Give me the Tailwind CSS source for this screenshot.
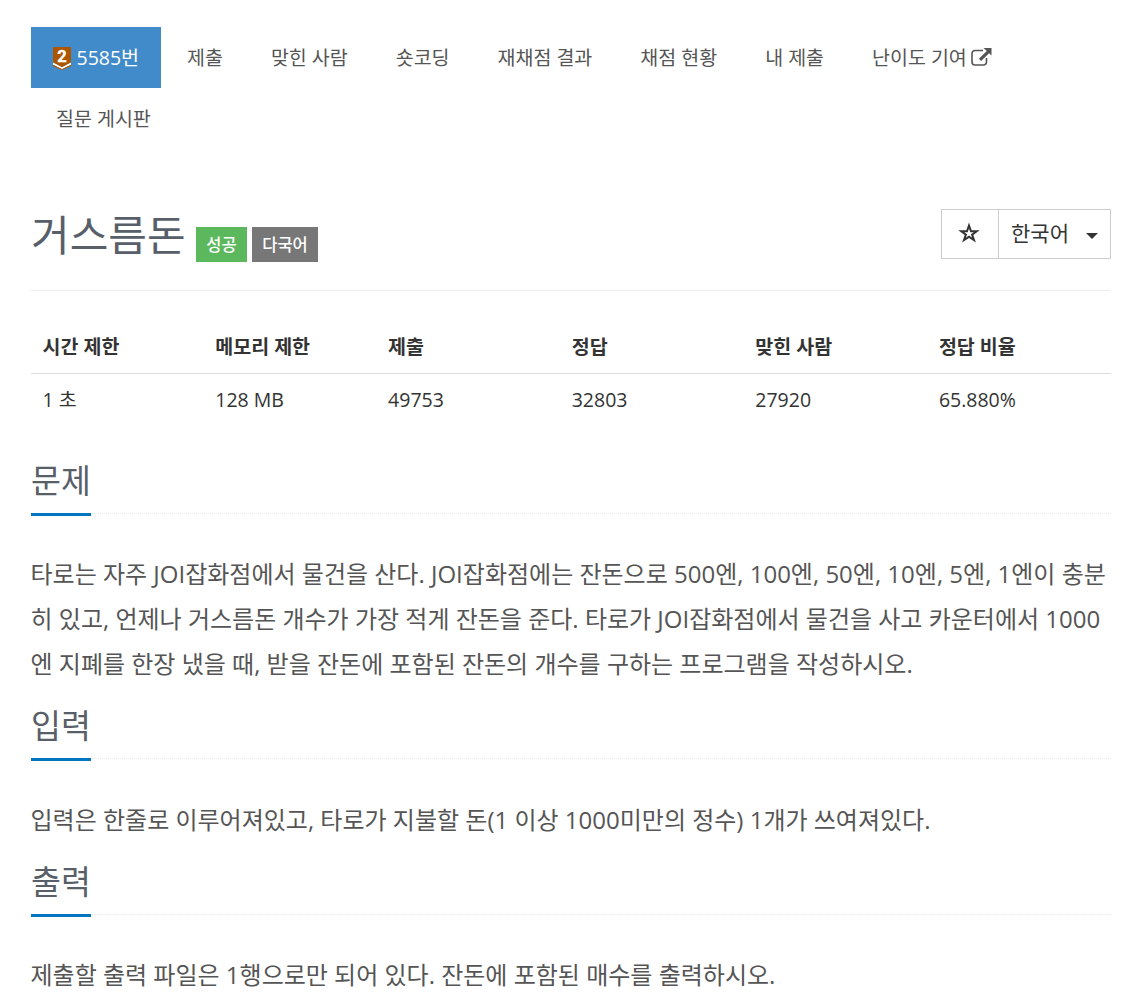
<!DOCTYPE html>
<html lang="ko">
<head>
    <meta charset="UTF-8">
    <meta name="viewport" content="width=device-width, initial-scale=1.0">
    <title>5585번: 거스름돈</title>
    <script src="https://cdn.jsdelivr.net/npm/@tailwindcss/browser@4"></script>
</head>
<body class="bg-white text-[#333] text-[19.5px] leading-[30px] font-['Open_Sans','Noto_Sans_CJK_KR',sans-serif]">

    <div class="w-[1080px] ml-[31px] pt-[27px]">
        <!-- Problem menu -->
        <nav class="flex flex-wrap gap-x-[3px] text-[#555]">
            <a href="#" class="flex items-center w-[130px] h-[61px] mr-[0.5px] pl-[22px] bg-[#428bca] text-white">
                <svg class="w-[18px] h-[23px] mt-[2px] mr-[5.5px]" viewBox="0 0 18 23">
                    <path d="M0 0h18v15.500l-9 4.700-9-4.700z" fill="#ad5600"/>
                    <path d="M0 15.500l9 4.700 9-4.700v2.200l-9 4.700-9-4.700z" fill="#fff"/>
                    <path d="M0 17.700l9 4.300 9-4.300v1.500l-9 3.800-9-3.800z" fill="#ad5600"/>
                    <text x="9" y="14.500" text-anchor="middle" fill="#fff" stroke="#fff" stroke-width="0.400" font-size="16.500" font-weight="700" font-family="Roboto, sans-serif">2</text>
                </svg>
                <span>5585번</span>
            </a>
            <a href="#" class="h-[61px] px-[22.5px] leading-[61px]">제출</a>
            <a href="#" class="h-[61px] px-[22.5px] leading-[61px]">맞힌 사람</a>
            <a href="#" class="h-[61px] px-[22.5px] leading-[61px]">숏코딩</a>
            <a href="#" class="h-[61px] px-[22.5px] leading-[61px]">재채점 결과</a>
            <a href="#" class="h-[61px] px-[22.5px] leading-[61px]">채점 현황</a>
            <a href="#" class="h-[61px] px-[22.5px] leading-[61px]">내 제출</a>
            <a href="#" class="flex items-center h-[61px] px-[22.5px]">
                <span>난이도 기여</span>
                <svg class="w-[21px] h-[19px] ml-[4.5px] -mt-px" viewBox="0 0 21 19">
                    <path d="M12 2.500H4A3 3 0 0 0 1 5.500v8.500A3 3 0 0 0 4 17h8.500a3 3 0 0 0 3-3v-4" fill="none" stroke="currentColor" stroke-width="1.600"/>
                    <path d="M12.500 0H20.500v7.500l-2.400-2.300-8 7.700-2.200-2.200 7.900-7.600z" fill="currentColor"/>
                </svg>
            </a>
            <a href="#" class="h-[61px] px-[25px] leading-[61px]">질문 게시판</a>
        </nav>

        <!-- Title -->
        <header class="flex items-start h-[142px] pt-[60px] border-b border-[#eee]">
            <h1 class="-mt-px w-[155px] text-[42px] leading-[54px] text-[#585f69]">거스름돈</h1>
            <span class="mt-[18px] ml-[10px] w-[51px] h-[35px] bg-[#5cb85c] text-white text-[16.5px] leading-[35px] text-center font-medium">성공</span>
            <span class="mt-[18px] ml-[5px] w-[66px] h-[35px] bg-[#777] text-white text-[16.5px] leading-[35px] text-center font-medium">다국어</span>
            <div class="flex ml-auto w-[170px] h-[50px] border border-[#ccc] text-[21px]">
                <button class="flex items-center justify-center w-[57px] border-r border-[#ccc]">
                    <svg class="w-[22px] h-[22px] -mt-[3px] -ml-[2px]" viewBox="0 0 22 22">
                        <path fill-rule="evenodd" d="M11 .5l2.700 7.700h8.100l-6.500 4.700 2.600 7.700-6.900-4.700-6.900 4.700 2.600-7.700L.2 8.200h8.100zM11 6.500L9.700 10.200H6.200l2.900 2.100-1.200 3.500 3.100-2.200 3.100 2.200-1.200-3.500 2.900-2.100h-3.500z" fill="#333"/>
                    </svg>
                </button>
                <button class="flex items-center flex-1 pl-[12px]">
                    <span class="-mt-[2px]">한국어</span>
                    <svg class="w-[12px] h-[6px] ml-[17px] mt-[4px]" viewBox="0 0 12 6"><path d="M0 0h12L6 6z" fill="#333"/></svg>
                </button>
            </div>
        </header>

        <!-- Limits and statistics -->
        <table class="w-full table-fixed mt-[29px] text-left">
            <thead>
                <tr class="h-[53px] border-b border-[#ddd]">
                    <th class="w-[16%] pt-px px-[11.5px] font-bold">시간 제한</th>
                    <th class="w-[16%] pt-px px-[11.5px] font-bold">메모리 제한</th>
                    <th class="w-[17%] pt-px px-[11.5px] font-bold">제출</th>
                    <th class="w-[17%] pt-px px-[11.5px] font-bold">정답</th>
                    <th class="w-[17%] pt-px px-[11.5px] font-bold">맞힌 사람</th>
                    <th class="w-[17%] pt-px px-[11.5px] font-bold">정답 비율</th>
                </tr>
            </thead>
            <tbody>
                <tr class="h-[53px]">
                    <td class="px-[11.5px]">1 초</td>
                    <td class="px-[11.5px]">128 MB</td>
                    <td class="px-[11.5px]">49753</td>
                    <td class="px-[11.5px]">32803</td>
                    <td class="px-[11.5px]">27920</td>
                    <td class="px-[11.5px]">65.880%</td>
                </tr>
            </tbody>
        </table>

        <!-- Problem text -->
        <section class="pt-[31px]">
            <div class="h-[57px] border-b border-dotted border-[#e4e9f0]">
                <h2 class="inline-block w-[60px] h-[59px] border-b-[3px] border-[#0076c0] text-[32.5px] leading-[48px] whitespace-nowrap text-[#585f69]">문제</h2>
            </div>
            <p class="-ml-[0.5px] -mr-[2px] pt-[37px] pb-px text-[24px] leading-[45px] text-[#555]">타로는 자주 JOI잡화점에서 물건을 산다. JOI잡화점에는 잔돈으로 500엔, 100엔, 50엔, 10엔, 5엔, 1엔이 충분<br>히 있고, 언제나 거스름돈 개수가 가장 적게 잔돈을 준다. 타로가 JOI잡화점에서 물건을 사고 카운터에서 1000<br>엔 지폐를 한장 냈을 때, 받을 잔돈에 포함된 잔돈의 개수를 구하는 프로그램을 작성하시오.</p>
        </section>
        <section class="pt-[15px]">
            <div class="h-[57px] border-b border-dotted border-[#e4e9f0]">
                <h2 class="inline-block w-[60px] h-[59px] border-b-[3px] border-[#0076c0] text-[32.5px] leading-[48px] whitespace-nowrap text-[#585f69]">입력</h2>
            </div>
            <p class="-ml-[0.5px] pt-[38px] pb-px text-[24px] leading-[45px] text-[#555]">입력은 한줄로 이루어져있고, 타로가 지불할 돈(1 이상 1000미만의 정수) 1개가 쓰여져있다.</p>
        </section>
        <section class="pt-[15px]">
            <div class="h-[57px] border-b border-dotted border-[#e4e9f0]">
                <h2 class="inline-block w-[60px] h-[59px] border-b-[3px] border-[#0076c0] text-[32.5px] leading-[48px] whitespace-nowrap text-[#585f69]">출력</h2>
            </div>
            <p class="-ml-[0.5px] pt-[37px] text-[24px] leading-[45px] text-[#555]">제출할 출력 파일은 1행으로만 되어 있다. 잔돈에 포함된 매수를 출력하시오.</p>
        </section>
    </div>

</body>
</html>
